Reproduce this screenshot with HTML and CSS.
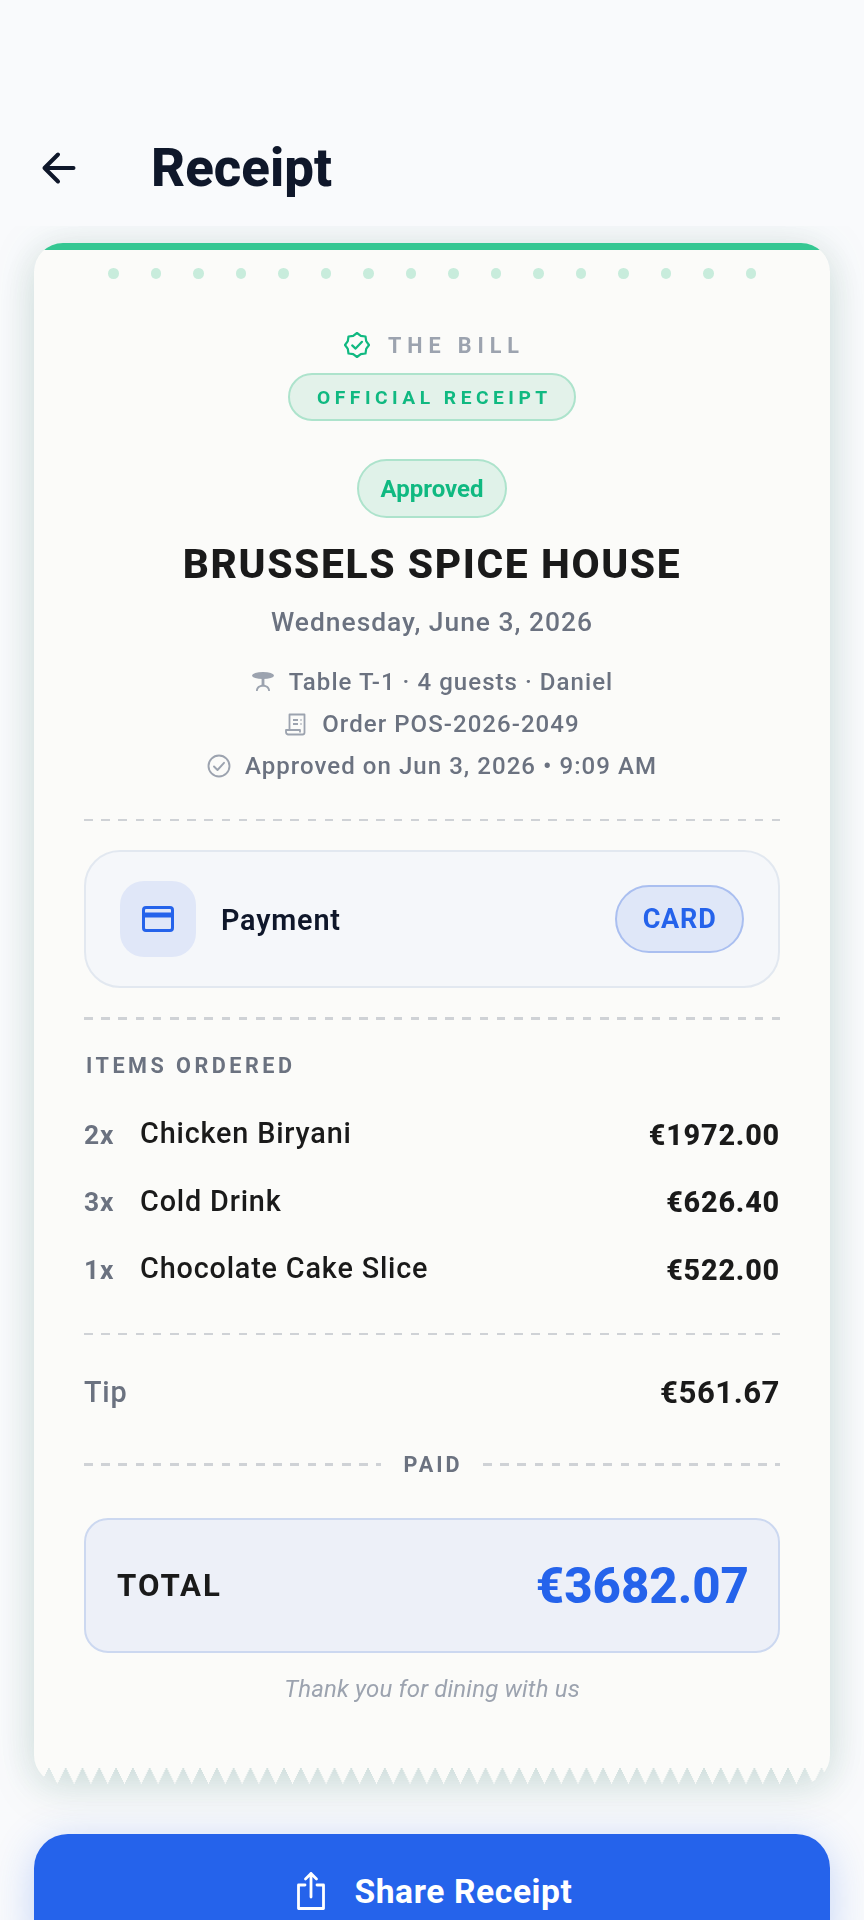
FILE: index.html
```html
<!DOCTYPE html>
<html lang="en">
<head>
  <meta charset="UTF-8" />
  <meta name="viewport" content="width=device-width, initial-scale=1.0"/>
  <title>Receipt</title>
  <link rel="stylesheet" href="styles.css">
</head>
<body>
  <header class="topo">
    <button class="voltar" aria-label="Back">
      <svg width="36" height="36" viewBox="0 0 36 36" fill="none" stroke="#0f172a" stroke-width="4" stroke-linecap="round" stroke-linejoin="round">
        <path d="M32.5 18H3.5M17 4.5L3.5 18L17 31.5"/>
      </svg>
    </button>
    <h1>Receipt</h1>
  </header>

  <main class="conteudo">
    <div class="recibo-sombra">
      <section class="recibo">
        <div class="faixa"></div>
        <div class="pontos">
          <i></i><i></i><i></i><i></i><i></i><i></i><i></i><i></i>
          <i></i><i></i><i></i><i></i><i></i><i></i><i></i><i></i>
        </div>

        <div class="cabecalho">
          <div class="marca">
            <svg width="26" height="26" viewBox="0 0 26 26" fill="none" stroke="#10b981" stroke-width="2.2" stroke-linejoin="round" stroke-linecap="round">
              <path d="M25 13L22.2 16.8L21.5 21.5L16.8 22.2L13 25L9.2 22.2L4.5 21.5L3.8 16.8L1 13L3.8 9.2L4.5 4.5L9.2 3.8L13 1L16.8 3.8L21.5 4.5L22.2 9.2Z"/>
              <path d="M8.2 13.4L11.6 16.6L18 9.8"/>
            </svg>
            <span>THE BILL</span>
          </div>
          <div class="selo">OFFICIAL RECEIPT</div>
          <div class="status">Approved</div>
          <h2>BRUSSELS SPICE HOUSE</h2>
          <p class="data">Wednesday, June 3, 2026</p>
          <ul class="meta">
            <li>
              <svg width="24" height="24" viewBox="0 0 24 24" fill="#9ca3af">
                <ellipse cx="12" cy="5.5" rx="11" ry="3.6"/>
                <rect x="10.6" y="8" width="2.8" height="8"/>
                <path d="M5 21c0-4 3-6.2 7-6.2s7 2.200 7 6.200h-1.800c0-2.800-2.300-4.300-5.200-4.300s-5.200 1.500-5.200 4.300z"/>
              </svg>
              Table T-1 · 4 guests · Daniel
            </li>
            <li>
              <svg width="24" height="24" viewBox="0 0 24 24" fill="none" stroke="#9ca3af" stroke-width="1.800" stroke-linejoin="round">
                <path d="M5.500 18V2.500H20.500V20.500A2 2 0 0 1 18.500 22.500H4A2.500 2.500 0 0 1 2 20V18H16V20.500"/>
                <path d="M9 8H14M16.500 8H17.500M9 12H14M16.500 12H17.500"/>
              </svg>
              Order POS-2026-2049
            </li>
            <li>
              <svg width="24" height="24" viewBox="0 0 24 24" fill="none" stroke="#9ca3af" stroke-width="1.900" stroke-linecap="round" stroke-linejoin="round">
                <circle cx="12" cy="12" r="10.500"/>
                <path d="M7 12.500L10.500 16L17 8.800"/>
              </svg>
              Approved on Jun 3, 2026 • 9:09 AM
            </li>
          </ul>
        </div>

        <div class="tracejado"></div>

        <div class="pagamento">
          <div class="pagamento-icone">
            <svg width="32" height="26" viewBox="0 0 32 26" fill="none">
              <rect x="1.500" y="1.500" width="29" height="23" rx="2.500" stroke="#2563eb" stroke-width="3"/>
              <rect x="1.500" y="6.500" width="29" height="5" fill="#2563eb"/>
            </svg>
          </div>
          <span class="pagamento-titulo">Payment</span>
          <span class="pagamento-tipo">CARD</span>
        </div>

        <div class="tracejado"></div>

        <h3 class="itens-titulo">ITEMS ORDERED</h3>
        <div class="item"><span class="qtd">2x</span><span class="nome">Chicken Biryani</span><span class="preco">€1972.00</span></div>
        <div class="item"><span class="qtd">3x</span><span class="nome">Cold Drink</span><span class="preco">€626.40</span></div>
        <div class="item"><span class="qtd">1x</span><span class="nome">Chocolate Cake Slice</span><span class="preco">€522.00</span></div>

        <div class="tracejado tracejado-itens"></div>

        <div class="gorjeta"><span>Tip</span><span class="preco-gorjeta">€561.67</span></div>

        <div class="pago">
          <div class="tracejado"></div>
          <span>PAID</span>
          <div class="tracejado"></div>
        </div>

        <div class="total">
          <span class="total-rotulo">TOTAL</span>
          <span class="total-valor">€3682.07</span>
        </div>

        <p class="obrigado">Thank you for dining with us</p>
      </section>
    </div>

    <button class="compartilhar">
      <svg width="30" height="40" viewBox="0 0 30 40" fill="none" stroke="#fff" stroke-width="2.800" stroke-linecap="round" stroke-linejoin="round">
        <path d="M9 14H2.500V37.500H27.500V14H21"/>
        <path d="M15 2.500V26M9.500 8L15 2.500L20.500 8"/>
      </svg>
      Share Receipt
    </button>
  </main>
</body>
</html>
```

FILE: styles.css
```css
* {
  box-sizing: border-box;
}

html, body {
  height: 1920px;
  overflow: hidden;
}

body {
  margin: 0;
  display: flex;
  flex-direction: column;
  font-family: Roboto, "Liberation Sans", sans-serif;
  background-color: #f9fafc;
  color: #1a1a1a;
}

h1, h2, h3, p, ul {
  margin: 0;
  padding: 0;
}

.topo {
  height: 226px;
  flex-shrink: 0;
  padding: 110px 0 0 41px;
  display: flex;
  align-items: center;
  gap: 74px;
}

.voltar {
  width: 36px;
  height: 36px;
  padding: 0;
  border: none;
  background: none;
}

.topo h1 {
  font-size: 52.8px;
  font-weight: 800;
  color: #0f172a;
}

.conteudo {
  flex: 1;
  min-height: 0;
  overflow: hidden;
  padding: 17px 34px 0;
}

.recibo-sombra {
  filter: drop-shadow(0 2px 20px rgba(16, 100, 80, 0.13)) drop-shadow(0 14px 20px rgba(16, 90, 70, 0.09));
}

/* o corpo termina 17px antes do fim, o resto sao os dentes do papel */
.recibo {
  position: relative;
  height: 1541px;
  padding: 0 50px;
  border-radius: 29px;
  overflow: hidden;
  background:
    linear-gradient(#fbfbf9, #fbfbf9) top left / 100% calc(100% - 17px) no-repeat,
    conic-gradient(from -26.300deg at 50% 100%, #fbfbf9 52.600deg, transparent 0) -1.900px 100% / 16.800px 17px repeat-x;
}

.faixa {
  position: absolute;
  top: 0;
  left: 0;
  right: 0;
  height: 7px;
  background-color: #34c792;
}

.pontos {
  position: absolute;
  top: 25px;
  left: 0;
  right: 0;
  display: flex;
  justify-content: center;
  gap: 32px;
}

.pontos i {
  width: 10.500px;
  height: 10.500px;
  border-radius: 50%;
  background-color: #c8ecdc;
}

.cabecalho {
  padding-top: 86px;
  display: flex;
  flex-direction: column;
  align-items: center;
}

.marca {
  height: 32px;
  padding-left: 5px;
  display: flex;
  align-items: center;
  gap: 18px;
  font-size: 21.600px;
  font-weight: 700;
  letter-spacing: 5.900px;
  color: #9ca3af;
}

.selo {
  margin-top: 12px;
  height: 48px;
  padding: 0 22.600px 0 27.400px;
  display: flex;
  align-items: center;
  border: 2.400px solid #ade3cc;
  border-radius: 24px;
  background-color: #e3f2ea;
  color: #10b981;
  font-size: 19.200px;
  font-weight: 700;
  letter-spacing: 4.500px;
}

.status {
  margin-top: 38px;
  height: 59px;
  padding: 0 21px;
  display: flex;
  align-items: center;
  border: 2.400px solid #ade3cc;
  border-radius: 30px;
  background-color: #e0f2e9;
  color: #10b981;
  font-size: 24px;
  font-weight: 700;
}

.cabecalho h2 {
  margin-top: 22px;
  font-size: 40.800px;
  line-height: 48px;
  font-weight: 800;
  letter-spacing: 1.600px;
  color: #1a1a1a;
}

.data {
  margin-top: 18px;
  font-size: 26.400px;
  line-height: 32px;
  font-weight: 500;
  letter-spacing: 1px;
  color: #6b7280;
}

.meta {
  margin-top: 23px;
  list-style: none;
}

.meta li {
  height: 42px;
  display: flex;
  align-items: center;
  justify-content: center;
  gap: 14px;
  font-size: 24px;
  font-weight: 500;
  letter-spacing: 1.050px;
  color: #6b7280;
}

.tracejado {
  height: 2.400px;
  background: repeating-linear-gradient(90deg, #cfd2d6 0, #cfd2d6 8.600px, transparent 8.600px, transparent 17.200px);
}

.cabecalho + .tracejado {
  margin-top: 32px;
}

.pagamento {
  margin: 29px 0;
  height: 138px;
  padding: 0 34px;
  display: flex;
  align-items: center;
  border: 2.400px solid #e2e8f0;
  border-radius: 36px;
  background-color: #f5f7fa;
}

.pagamento-icone {
  width: 76px;
  height: 76px;
  margin-right: 25px;
  display: flex;
  align-items: center;
  justify-content: center;
  border-radius: 24px;
  background-color: #e0e7f8;
}

.pagamento-titulo {
  flex: 1;
  padding-top: 1px;
  font-size: 28.800px;
  font-weight: 600;
  letter-spacing: 0.800px;
  color: #0f172a;
}

.pagamento-tipo {
  height: 68px;
  padding: 0 25.500px;
  display: flex;
  align-items: center;
  border: 2.400px solid #aabff0;
  border-radius: 34px;
  background-color: #dfe7f8;
  color: #2563eb;
  font-size: 27px;
  font-weight: 700;
  letter-spacing: 0.800px;
}

.itens-titulo {
  margin: 33px 0 22.400px 2px;
  font-size: 21.600px;
  line-height: 26px;
  font-weight: 700;
  letter-spacing: 3.500px;
  color: #6b7280;
}

.item {
  height: 67.500px;
  display: flex;
  align-items: center;
}

.qtd {
  width: 56px;
  font-size: 26.400px;
  font-weight: 700;
  letter-spacing: 0.900px;
  color: #6b7280;
}

.nome {
  flex: 1;
  margin-top: -3px;
  font-size: 28.800px;
  font-weight: 500;
  letter-spacing: 0.830px;
  color: #1a1a1a;
}

.preco {
  font-size: 28.800px;
  font-weight: 800;
  letter-spacing: 0.800px;
  color: #1a1a1a;
}

.tracejado-itens {
  margin-top: 29px;
}

.gorjeta {
  margin-top: 27px;
  height: 60px;
  display: flex;
  align-items: center;
  justify-content: space-between;
  font-size: 28.800px;
  font-weight: 500;
  letter-spacing: 0.800px;
  color: #6b7280;
}

.preco-gorjeta {
  font-size: 31.200px;
  font-weight: 700;
  letter-spacing: 0.500px;
  color: #1a1a1a;
}

.pago {
  margin-top: 30px;
  display: flex;
  align-items: center;
  gap: 20px;
  font-size: 21.600px;
  font-weight: 700;
  letter-spacing: 3px;
  color: #6b7280;
}

.pago span {
  padding-left: 2px;
}

.pago .tracejado {
  flex: 1;
}

.total {
  margin-top: 41px;
  height: 135px;
  padding: 0 29px 0 31px;
  display: flex;
  align-items: center;
  justify-content: space-between;
  border: 2.400px solid #ccd8f0;
  border-radius: 24px;
  background-color: #edf0f8;
}

.total-rotulo {
  font-size: 31.200px;
  font-weight: 700;
  letter-spacing: 2px;
}

.total-valor {
  font-size: 49.200px;
  font-weight: 800;
  color: #2563eb;
}

.obrigado {
  margin-top: 22px;
  text-align: center;
  font-size: 24px;
  font-style: italic;
  letter-spacing: 0.150px;
  color: #9ca3af;
}

.compartilhar {
  width: 100%;
  height: 120px;
  margin-top: 50px;
  padding: 0 0 6px 5px;
  display: flex;
  align-items: center;
  justify-content: center;
  gap: 28px;
  border: none;
  border-radius: 34px;
  background-color: #2563eb;
  box-shadow: 0 8px 40px rgba(37, 99, 235, 0.25);
  color: #fff;
  font-family: inherit;
  font-size: 33.600px;
  font-weight: 700;
  letter-spacing: 0.600px;
}
```
